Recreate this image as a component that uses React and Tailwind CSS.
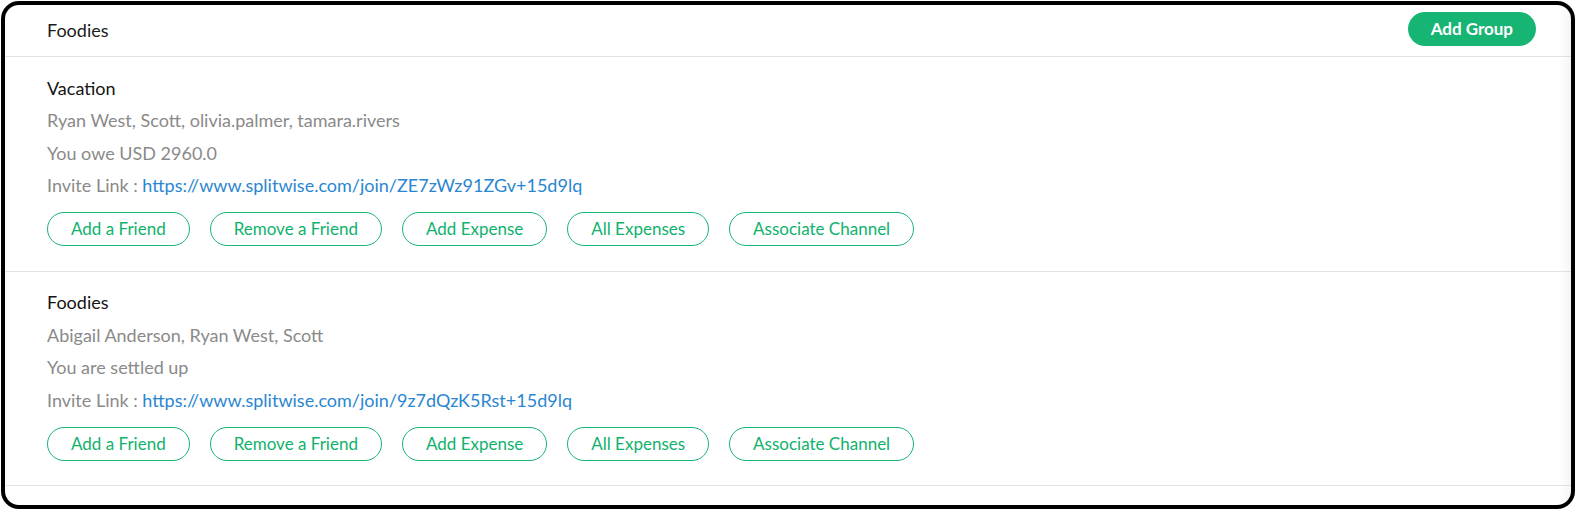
import React from "react";

const groups = [
  {
    name: "Vacation",
    members: "Ryan West, Scott, olivia.palmer, tamara.rivers",
    status: "You owe USD 2960.0",
    link: "https://www.splitwise.com/join/ZE7zWz91ZGv+15d9lq",
  },
  {
    name: "Foodies",
    members: "Abigail Anderson, Ryan West, Scott",
    status: "You are settled up",
    link: "https://www.splitwise.com/join/9z7dQzK5Rst+15d9lq",
  },
];

const actions = ["Add a Friend", "Remove a Friend", "Add Expense", "All Expenses", "Associate Channel"];

export default function App() {
  return (
    <div className="w-[1575px] h-[509px] bg-white pl-[1px] pt-[1px]" style={{ fontFamily: "Lato, 'Open Sans', sans-serif" }}>
      <div className="relative w-[1574px] h-[508px] border-4 border-black rounded-[18px] overflow-hidden bg-white">
        <div className="flex items-center justify-between h-[52px] pl-[42px] pr-[35px] pb-[1px] border-b border-[#e3e3e3]">
          <span className="text-[18px] leading-6 text-[#1b1b1b]">Foodies</span>
          <button className="h-[34px] mb-[2px] px-[23px] rounded-full bg-[#17b574] text-white font-bold text-[17px] leading-6">
            Add Group
          </button>
        </div>
        {groups.map((g) => (
          <div key={g.name} className="pl-[42px] pt-[18.5px] pb-[24.5px] border-b border-[#e3e3e3]">
            <div className="text-[18px] leading-6 text-[#141414]">{g.name}</div>
            <div className="text-[18px] leading-6 text-[#8a8a8a] mt-[8.5px]">{g.members}</div>
            <div className="text-[18px] leading-6 text-[#8a8a8a] mt-[8.5px]">{g.status}</div>
            <div className="text-[18px] leading-6 text-[#8a8a8a] mt-[8.5px]">
              Invite Link : <span className="text-[#2a86d1]">{g.link}</span>
            </div>
            <div className="flex gap-5 mt-[15px]">
              {actions.map((a) => (
                <button
                  key={a}
                  className="h-[34px] px-[23px] rounded-full border border-[#17b574] text-[#0fb26c] text-[17px] leading-6"
                >
                  {a}
                </button>
              ))}
            </div>
          </div>
        ))}
        <div className="absolute right-0 top-0 bottom-0 w-[12px] bg-gradient-to-r from-transparent to-black/[0.04] pointer-events-none" />
      </div>
    </div>
  );
}
